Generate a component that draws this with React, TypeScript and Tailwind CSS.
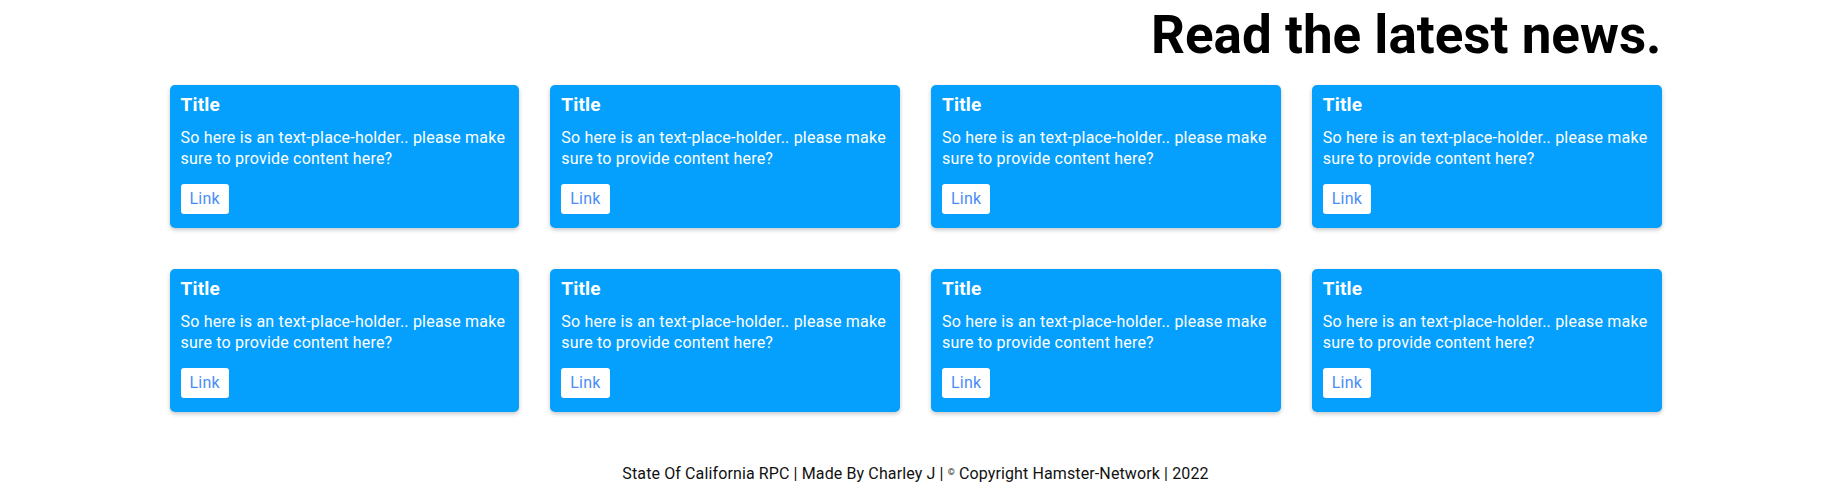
import React from "react";

function Card() {
  return (
    <div className="bg-[#05a0fd] rounded-[5px] shadow-[0_2px_4px_rgba(0,0,0,0.22)] px-[11px] pt-[8px] pb-[14px] text-white">
      <div className="text-[19px] font-bold leading-[24px] tracking-[0.2px]">Title</div>
      <p className="mt-[10px] text-[16px] leading-[21px] tracking-[0.2px]">
        So here is an text-place-holder.. please make sure to provide content here?
      </p>
      <button className="mt-[15px] h-[30px] px-[9px] bg-white rounded-[3px] text-[16px] text-[#4a8df7] leading-[30px] tracking-[0.2px]">
        Link
      </button>
    </div>
  );
}

export default function App() {
  return (
    <div className="min-h-screen bg-white font-['Roboto',sans-serif] text-black">
      <div className="mx-auto w-[1492px]">
        <h1 className="h-[85px] text-right text-[53px] font-bold leading-[70px]">
          Read the latest news.
        </h1>
        <div className="grid grid-cols-4 gap-x-[31px] gap-y-[41px]">
          {Array.from({ length: 8 }).map((_, i) => (
            <Card key={i} />
          ))}
        </div>
      </div>
      <footer className="mt-[50px] text-center text-[16px] leading-[24px] tracking-[0.12px] text-[#111]">
        State Of California RPC | Made By Charley J | <sup className="text-[9px]">©</sup> Copyright Hamster-Network | 2022
      </footer>
    </div>
  );
}
